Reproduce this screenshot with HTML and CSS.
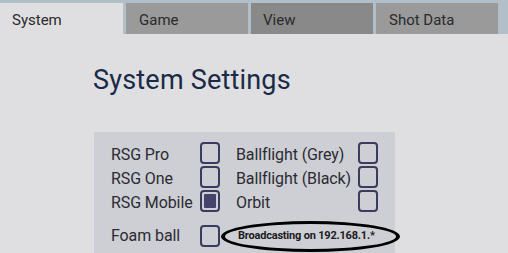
FILE: index.html
```html
<!DOCTYPE html>
<html lang="en">
<head>
    <meta charset="UTF-8">
    <title>System Settings</title>
    <link rel="stylesheet" href="styles.css">
</head>
<body>
    <div class="tabs">
        <div class="tab active">System</div>
        <div class="tab">Game</div>
        <div class="tab hover">View</div>
        <div class="tab">Shot Data</div>
    </div>
    <div class="content">
        <h1>System Settings</h1>
        <div class="panel">
            <div class="grid">
                <div class="label">RSG Pro</div>
                <div class="check"></div>
                <div class="label">Ballflight (Grey)</div>
                <div class="check"></div>

                <div class="label">RSG One</div>
                <div class="check"></div>
                <div class="label">Ballflight (Black)</div>
                <div class="check"></div>

                <div class="label">RSG Mobile</div>
                <div class="check checked"></div>
                <div class="label">Orbit</div>
                <div class="check"></div>

                <div class="label last">Foam ball</div>
                <div class="check last"></div>
                <div class="broadcast last">Broadcasting on 192.168.1.*</div>
            </div>
            <div class="ring"></div>
        </div>
    </div>
</body>
</html>
```

FILE: styles.css
```css
body {
    margin: 0;
    height: 253px;
    overflow: hidden;
    background: #b2bfc8;
    font-family: 'Roboto', sans-serif;
    color: #2b2b33;
}

.tabs {
    display: flex;
    gap: 3px;
    padding-top: 3px;
    height: 31px;
}

.tab {
    width: 122px;
    padding: 3px 0 0 13px;
    box-sizing: border-box;
    background: #9a9a9a;
    font-size: 15px;
    line-height: 28px;
    color: #2a2a2a;
}

.tab:first-child {
    width: 123px;
    padding-left: 12px;
}

.tab.active {
    background: #dfdfe1;
}

.tab.hover {
    background: #898989;
    padding-left: 12px;
}

.content {
    background: #dfdfe1;
    height: 219px;
    padding-left: 93px;
    padding-top: 1px;
}

h1 {
    margin: 29px 0 0 0;
    font-weight: 400;
    font-size: 27px;
    line-height: 32px;
    color: #1b2a47;
    letter-spacing: 0.2px;
}

.panel {
    position: relative;
    margin: 36px 0 0 1px;
    width: 301px;
    height: 130px;
    background: #cdcfd4;
}

.grid {
    display: grid;
    grid-template-columns: 89px 36px 122px 21px;
    grid-auto-rows: 24px;
    padding: 10px 0 0 17px;
}

.label {
    font-size: 16px;
    line-height: 24px;
    padding-top: 1px;
    color: #2b2b33;
    letter-spacing: -0.1px;
}

.check {
    width: 20px;
    height: 22px;
    box-sizing: border-box;
    border: 2px solid #3b3b5e;
    border-radius: 4px;
}

.check.checked {
    padding: 2px;
}

.check.checked::after {
    content: '';
    display: block;
    height: 100%;
    background: #45436b;
    border-radius: 1px;
}

.last {
    margin-top: 11px;
}

.label.last {
    padding-top: 0;
    margin-top: 10px;
}

.broadcast {
    grid-column: 3 / 5;
    font-size: 11px;
    font-weight: 700;
    line-height: 22px;
    color: #1b1b22;
    padding-left: 2px;
    letter-spacing: -0.2px;
}

.ring {
    position: absolute;
    left: 127px;
    top: 89px;
    width: 179px;
    height: 31px;
    box-sizing: border-box;
    border: 3px solid #000;
    border-left-width: 4px;
    border-right-width: 4px;
    border-radius: 50%;
}
```
